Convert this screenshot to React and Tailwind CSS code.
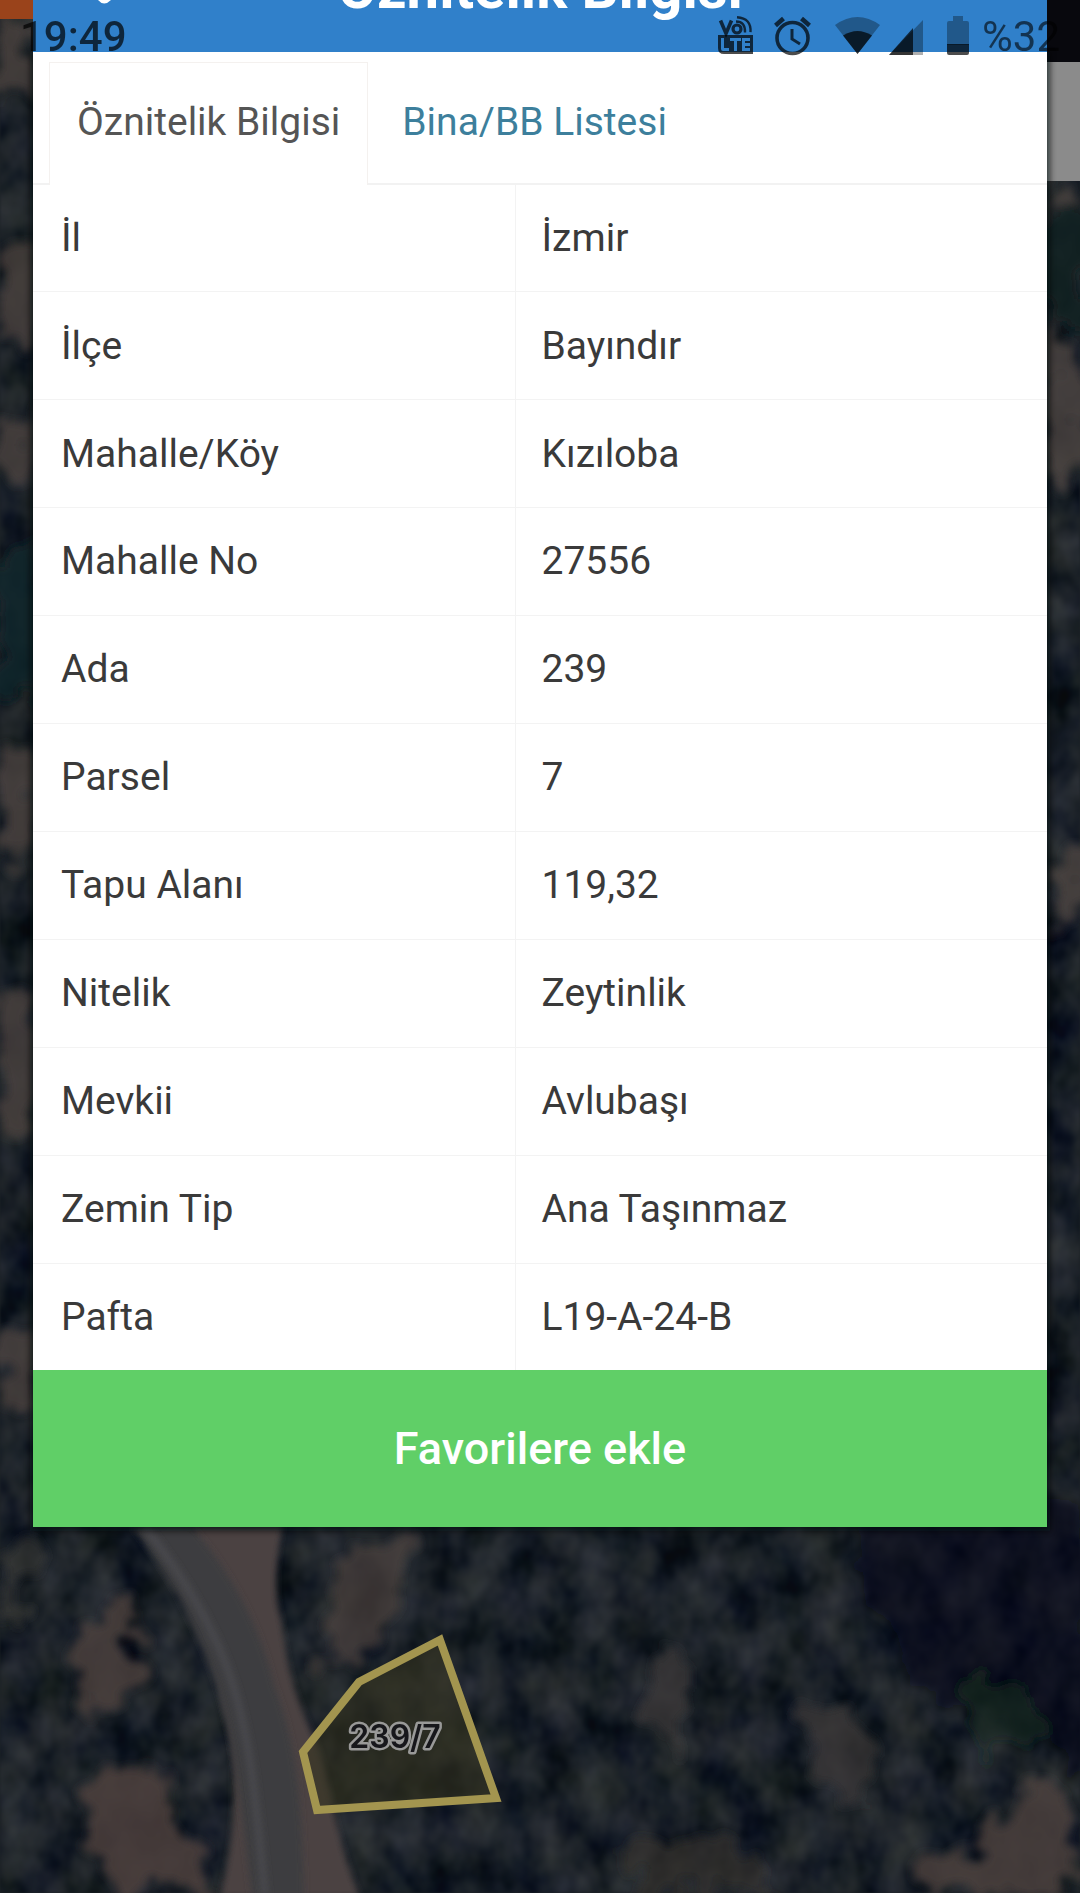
import React from "react";

const rows = [
  ["İl", "İzmir"],
  ["İlçe", "Bayındır"],
  ["Mahalle/Köy", "Kızıloba"],
  ["Mahalle No", "27556"],
  ["Ada", "239"],
  ["Parsel", "7"],
  ["Tapu Alanı", "119,32"],
  ["Nitelik", "Zeytinlik"],
  ["Mevkii", "Avlubaşı"],
  ["Zemin Tip", "Ana Taşınmaz"],
  ["Pafta", "L19-A-24-B"],
];

// Darkened satellite map with the selected parcel
function SatelliteMap() {
  return (
    <svg className="absolute inset-0 h-full w-full" viewBox="0 0 1080 1893" preserveAspectRatio="xMidYMax slice" aria-hidden="true">
      <defs>
        <filter id="trees" x="0" y="0" width="100%" height="100%" colorInterpolationFilters="sRGB">
          <feTurbulence type="fractalNoise" baseFrequency="0.026 0.021" numOctaves="3" seed="8" />
          <feColorMatrix values="0.4 0.05 0 0 -0.115  0.38 0.07 0 0 -0.095  0.34 0.04 0.1 0 -0.085  0 0 0 0 1" />
          <feComponentTransfer>
            <feFuncR type="table" tableValues="0.03 0.12 0.19 0.25 0.3 0.3 0.3 0.3 0.3" />
            <feFuncG type="table" tableValues="0.04 0.13 0.2 0.25 0.29 0.3 0.3 0.3 0.3" />
            <feFuncB type="table" tableValues="0.05 0.14 0.21 0.26 0.29 0.3 0.3 0.3 0.3" />
          </feComponentTransfer>
          <feGaussianBlur stdDeviation="1" />
        </filter>
        <filter id="edge" x="-10%" y="-10%" width="120%" height="120%">
          <feTurbulence type="fractalNoise" baseFrequency="0.03" numOctaves="3" seed="3" result="n" />
          <feDisplacementMap in="SourceGraphic" in2="n" scale="60" xChannelSelector="R" yChannelSelector="G" />
          <feGaussianBlur stdDeviation="4" />
        </filter>
        <filter id="soft">
          <feGaussianBlur stdDeviation="3" />
        </filter>
      </defs>
      <rect width="1080" height="1893" fill="#1c2224" />
      <rect width="1080" height="1893" filter="url(#trees)" />
      <g filter="url(#edge)">
        <path d="M850 1500h240v280l-80-60-90-30-60-100z" fill="#040c11" opacity=".5" />
        <path d="M960 1680h60l20 60-60 20z" fill="#0d2a22" opacity=".5" />
        <path d="M340 1555l70-20-5 60-50 70-30-5z" fill="#49413d" opacity=".75" />
        <path d="M85 1620l45-40 10 100-35 40-25-40z" fill="#4b413d" opacity=".85" />
        <path d="M20 1530l30 20-30 60-20 10z" fill="#3e3b38" opacity=".6" />
        <path d="M95 1780l60-20 30 80 35 55h-90l-50-60z" fill="#4d403d" opacity=".85" />
        <path d="M800 1700l60 20 20 70-40 10zM660 1640l30 60-20 50-20-40z" fill="#3b3737" opacity=".7" />
        <path d="M1010 1800l50-15 20 108h-170l10-30 60-10z" fill="#4a413d" opacity=".85" />
        <path d="M620 1850l120-10 40 60h-140z" fill="#37332f" opacity=".6" />
        <path d="M0 20h40v80H0zM0 250h40v90H0zM0 410h40v60H0zM0 740h40v120H0zM0 990h40v140H0zM0 1330h40v90H0z" fill="#4b4140" opacity=".8" />
        <path d="M0 540h40v160H0z" fill="#10242a" opacity=".8" />
        <path d="M1046 180h40v30h-40zM1046 340h40v140h-40zM1046 860h40v70h-40z" fill="#4d4342" opacity=".8" />
        <path d="M1046 220h40v110h-40z" fill="#12221f" opacity=".8" />
      </g>
      {/* Road and its verge */}
      <path d="M190 1525h92c-4 30-10 60-2 90 8 50 10 70 34 122 18 48 20 100 46 160H220c16-60 20-130 4-190z" fill="#4b4342" filter="url(#soft)" />
      <path d="M132 1527c40 50 66 105 84 158 20 65 25 120 36 212h52c-2-90-6-150-30-212-14-60-46-118-84-160z" fill="#3e3e41" filter="url(#soft)" />
      <path d="M145 1527c46 60 72 108 88 158 18 60 22 110 32 210" fill="none" stroke="#4a4a4d" strokeWidth="7" filter="url(#soft)" />
      <rect width="33" height="19" fill="#9a431b" />
      <rect x="1046" width="34" height="62" fill="#08080d" />
      <rect x="1046" y="62" width="34" height="119" fill="#8b8b8b" />
      <rect x="30" y="52" width="1020" height="1479" fill="#060909" opacity=".65" filter="url(#soft)" />
      <path d="M440 1640L496 1798L317 1810L303 1752L359 1682Z" fill="#35331f" fillOpacity=".6" stroke="#a3954f" strokeWidth="8" />
      <text x="395" y="1748" textAnchor="middle" className="font-[Inter,sans-serif] text-[32px] font-semibold" fill="#17171b" stroke="#999998" strokeWidth="5" paintOrder="stroke" strokeLinejoin="round">
        239/7
      </text>
    </svg>
  );
}

function StatusBar() {
  return (
    <div className="absolute inset-x-0 top-0 flex h-[62px] items-end justify-between pr-5 pb-[2px] pl-5 text-black/70">
      <span className="text-[42px] leading-[46px] font-medium">19:49</span>
      <svg className="absolute top-4 left-[717px] h-[42px] w-[252px]" viewBox="0 0 252 42" aria-hidden="true">
        <g fill="none" stroke="currentColor">
          <path d="M3.5 4.5l5.5 13 5.5-13" strokeWidth="3.6" />
          <circle cx="20" cy="13" r="4" strokeWidth="3.2" />
          <path d="M19 5.500q9.500 0 9 11M20 1.200q14.500 1 13.500 15" strokeWidth="2.4" />
        </g>
        <path fillRule="evenodd" d="M1 19h35v19H7q-6 0-6-6zM4 22v11q0 2 2 2h6v-3H7V22zM13 22v3h4v10h3V25h4v-3zM25 22v13h8v-3h-5v-2h5v-3h-5v-2h5v-3z" fill="currentColor" />
        <g fill="none" stroke="currentColor" strokeWidth="3.6">
          <circle cx="75.5" cy="22" r="15.5" />
          <path d="M75 13v10l8 5" strokeWidth="3" />
          <path d="M58.5 9.5l8-7M84.5 2.5l8 7" strokeWidth="4.5" />
        </g>
        <path d="M118 9q22.500-16 45 0l-22.500 29z" fill="currentColor" opacity=".45" />
        <path d="M126 19.500q14.500-9 29 0l-14.500 18.500z" fill="currentColor" />
        <path d="M172 39l34-35v35z" fill="currentColor" opacity=".45" />
        <path d="M172 39l24-27v27z" fill="currentColor" />
        <path d="M232 5h4V0h10v5h4q2 0 2 2v22h-22V7q0-2 2-2z" fill="currentColor" opacity=".45" />
        <path d="M230 28h22v9q0 2-2 2h-18q-2 0-2-2z" fill="currentColor" />
      </svg>
      <span className="text-[42px] leading-[46px] text-black/60">%32</span>
    </div>
  );
}

export default function App() {
  return (
    <div className="relative min-h-screen overflow-hidden bg-[#1c2224] font-[Roboto,sans-serif]">
      <SatelliteMap />

      <main className="relative mx-[33px] bg-white">
        {/* Title bar, scrolled under the status bar */}
        <header className="relative flex h-[52px] items-end justify-center overflow-hidden bg-[#3080ca] pb-8">
          <svg className="absolute top-0 left-[62px] h-1 w-5" viewBox="0 0 20 4" aria-hidden="true">
            <path d="M3 0q6 7 13 0z" fill="#fff" />
          </svg>
          <h1 className="text-[58px] leading-[64px] font-bold text-white">Öznitelik Bilgisi</h1>
        </header>

        <nav className="flex h-[133px] border-b-2 border-[#f2f2f2] pt-[10px] pl-4 text-[39px]">
          <button className="-mb-[2px] border border-b-0 border-[#f4f1ef] bg-white px-[27px] pb-1 text-[#555]">
            Öznitelik Bilgisi
          </button>
          <button className="px-[34px] text-[#3d7f9c]">Bina/BB Listesi</button>
        </nav>

        <table className="h-[1185px] w-full table-fixed border-collapse text-left text-[39px] text-[#3a3a3a]">
          <tbody>
            {rows.map(([label, value]) => (
              <tr key={label} className="border-b border-[#f3f3f3] last:border-b-0">
                <th scope="row" className="w-[482px] border-r border-[#f3f3f3] pl-[28px] font-normal">
                  {label}
                </th>
                <td className="pl-[26px]">{value}</td>
              </tr>
            ))}
          </tbody>
        </table>

        <button className="block h-[157px] w-full bg-[#60cf67] text-[45px] font-medium text-white">
          Favorilere ekle
        </button>
      </main>

      <StatusBar />
    </div>
  );
}
